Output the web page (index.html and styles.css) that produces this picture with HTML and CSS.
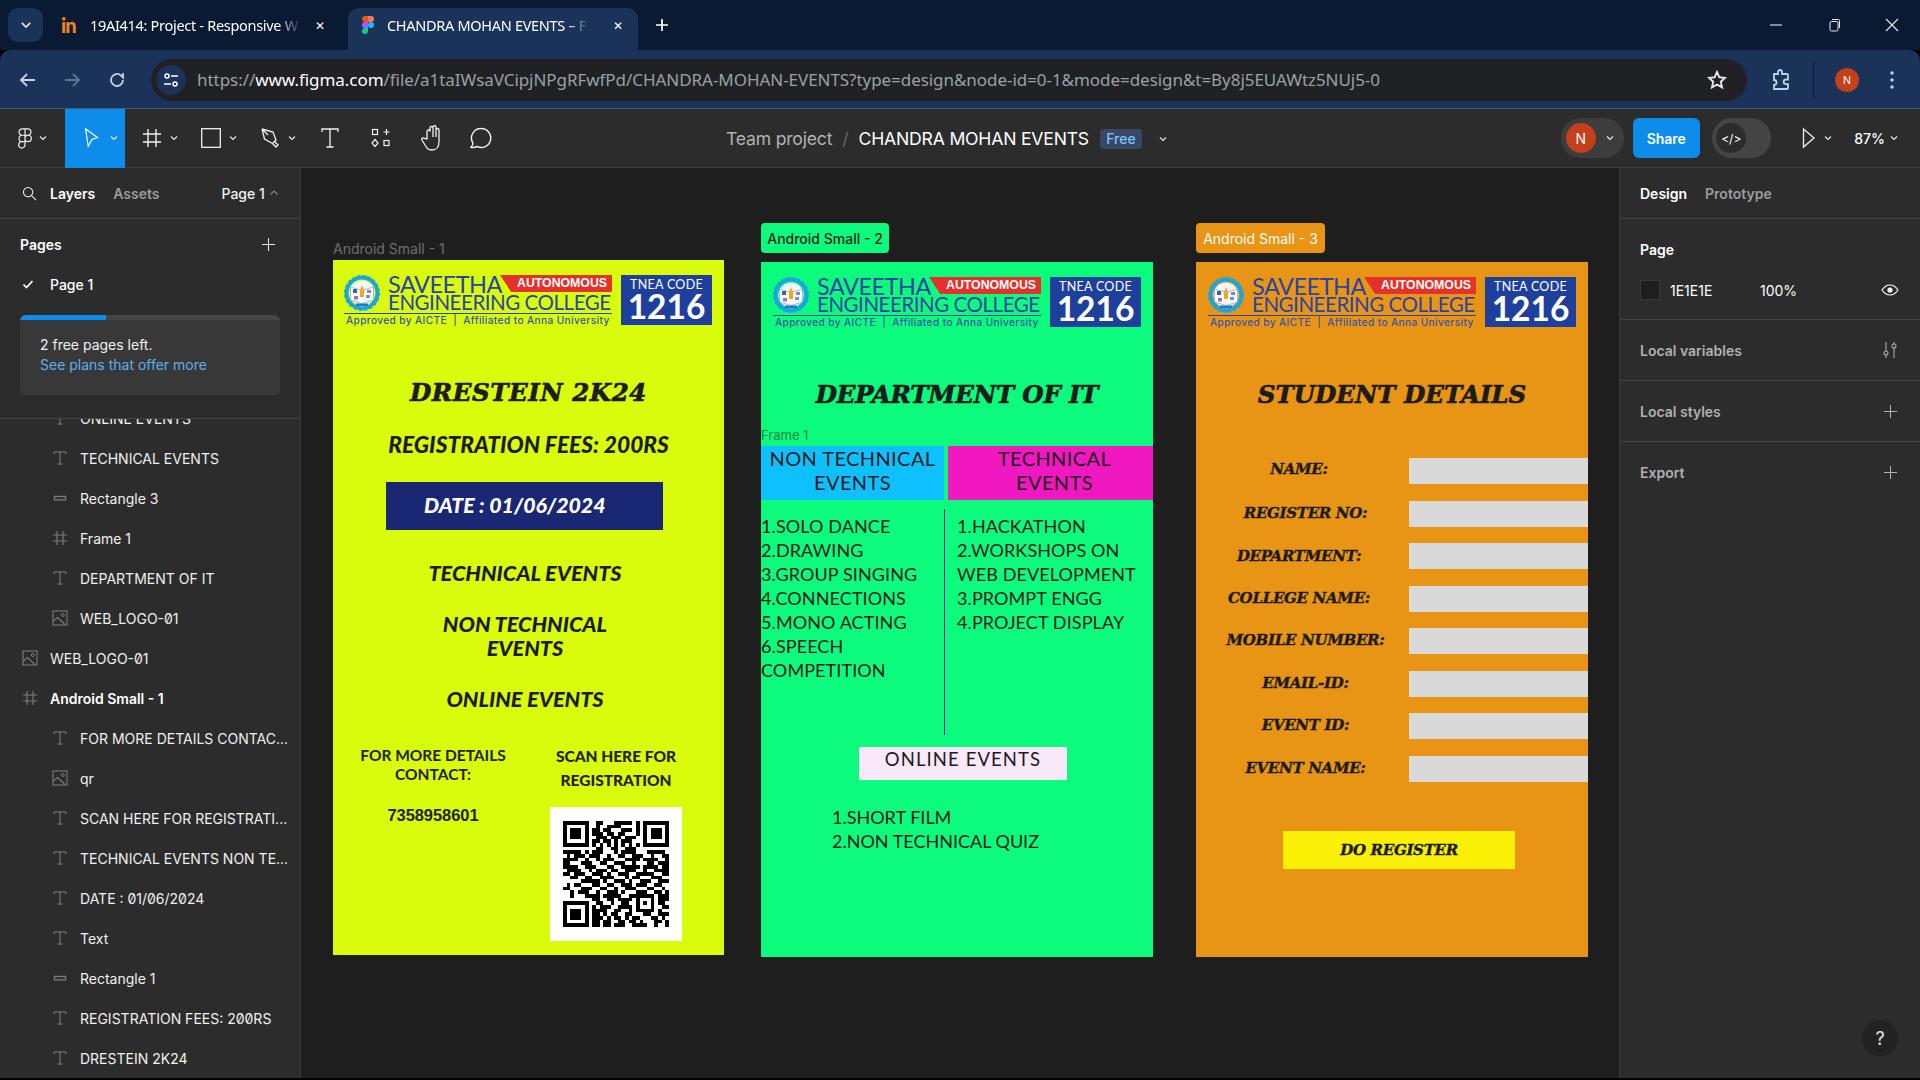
FILE: index.html
```html
<!DOCTYPE html>
<html lang="en">
<head>
<meta charset="utf-8">
<title>CHANDRA MOHAN EVENTS – Figma</title>
<link rel="stylesheet" href="styles.css">
</head>
<body>
<svg class="defs" xmlns="http://www.w3.org/2000/svg">
  <symbol id="chev" viewBox="0 0 10 10"><path d="M2 3.5 5 6.5 8 3.5" fill="none" stroke="currentColor" stroke-width="1.2"/></symbol>
  <symbol id="i-t" viewBox="0 0 16 16"><path d="M2 4V2h12v2M8 2v12M5.5 14h5" fill="none" stroke="#7b7b7b" stroke-width="1.1"/></symbol>
  <symbol id="i-rect" viewBox="0 0 16 16"><rect x="2.5" y="6.5" width="11" height="3.4" fill="none" stroke="#7b7b7b" stroke-width="1.3"/></symbol>
  <symbol id="i-frame" viewBox="0 0 16 16"><path d="M5 1v14M11 1v14M1 5h14M1 11h14" fill="none" stroke="#7b7b7b" stroke-width="1.2"/></symbol>
  <symbol id="i-img" viewBox="0 0 16 16"><rect x="1" y="1" width="14" height="14" fill="none" stroke="#7b7b7b" stroke-width="1.1"/><circle cx="10.8" cy="5" r="1.5" fill="none" stroke="#7b7b7b"/><path d="M1 11.5 5.5 7.5 13 14.5" fill="none" stroke="#7b7b7b" stroke-width="1.1"/></symbol>
  <symbol id="plus" viewBox="0 0 16 16"><path d="M8 1v14M1 8h14" fill="none" stroke="currentColor" stroke-width="1.1"/></symbol>
  <symbol id="gear" viewBox="0 0 36 36">
    <circle cx="18" cy="18" r="15.5" fill="none" stroke="#1ba6dd" stroke-width="4"/>
    <circle cx="18" cy="18" r="16.5" fill="none" stroke="#1ba6dd" stroke-width="3" stroke-dasharray="2.6 2.6"/>
    <circle cx="18" cy="18" r="12.5" fill="#f1f6fb"/>
    <path d="M6.5 12 18 15.5 29.5 12V25L18 28.5 6.5 25Z" fill="#fff" stroke="#7f9ad0" stroke-width=".7"/>
    <rect x="9" y="14" width="4" height="4" fill="#3a62b0"/>
    <rect x="10" y="21" width="4" height="3.5" fill="#a06ac6"/>
    <rect x="23" y="15" width="4" height="3" fill="#8e7ad0"/>
    <rect x="22" y="20" width="4" height="3" fill="#5d9bd8"/>
    <path d="M18 10 20.6 17H15.4Z" fill="#f2a51f"/>
    <rect x="16" y="17" width="4" height="5" fill="#f2a51f"/>
    <rect x="12" y="28.5" width="12" height="2.5" fill="#1b7bbf"/>
  </symbol>
</svg>

<div class="app">
  <header class="strip">
    <div class="tab-list"><svg class="ic10 white"><use href="#chev"/></svg></div>
    <div class="tab first-tab">
      <span class="fav-in">in</span>
      <span class="tab-title dim">19AI414: Project - Responsive W</span>
      <span class="tab-x">✕</span>
    </div>
    <div class="tab active">
      <svg class="fav-fig" viewBox="0 0 12 18"><circle cx="9" cy="9" r="3" fill="#1abcfe"/><path d="M3 18a3 3 0 0 0 3-3v-3H3a3 3 0 0 0 0 6Z" fill="#0acf83"/><path d="M0 9a3 3 0 0 1 3-3h3v6H3a3 3 0 0 1-3-3Z" fill="#a259ff"/><path d="M0 3a3 3 0 0 1 3-3h3v6H3a3 3 0 0 1-3-3Z" fill="#f24e1e"/><path d="M6 0h3a3 3 0 0 1 0 6H6Z" fill="#ff7262"/></svg>
      <span class="tab-title">CHANDRA MOHAN EVENTS – F</span>
      <span class="tab-x">✕</span>
    </div>
    <svg class="new-tab" viewBox="0 0 14 14"><path d="M7 1v12M1 7h12" stroke="#fff" stroke-width="1.7"/></svg>
    <div class="win">
      <svg viewBox="0 0 14 14"><path d="M1 7h12" stroke="#e6e9ef" stroke-width="1.1"/></svg>
      <svg viewBox="0 0 14 14"><rect x="3" y="3.5" width="8" height="9.5" rx="1.5" fill="none" stroke="#e6e9ef"/><path d="M5 1.5h6.5a1 1 0 0 1 1 1V10" fill="none" stroke="#e6e9ef"/></svg>
      <svg viewBox="0 0 14 14"><path d="M1 1l12 12M13 1 1 13" stroke="#e6e9ef" stroke-width="1.1"/></svg>
    </div>
  </header>

  <nav class="nav">
    <svg class="nav-ic" viewBox="0 0 20 20"><path d="M17 10H3.5M9 4l-6 6 6 6" fill="none" stroke="#c3d0e4" stroke-width="1.8"/></svg>
    <svg class="nav-ic" viewBox="0 0 20 20"><path d="M3 10h13.5M11 4l6 6-6 6" fill="none" stroke="#61758f" stroke-width="1.8"/></svg>
    <svg class="nav-ic" viewBox="0 0 20 20"><path d="M16 10a6 6 0 1 1-2-4.5L16 7.5V3" fill="none" stroke="#c3d0e4" stroke-width="1.8"/></svg>
    <div class="omni">
      <span class="site"><svg viewBox="0 0 18 18"><circle cx="5" cy="5" r="2" fill="none" stroke="#fff" stroke-width="1.5"/><path d="M9 5h7M2 13h7" stroke="#fff" stroke-width="1.5"/><circle cx="13" cy="13" r="2" fill="none" stroke="#fff" stroke-width="1.5"/></svg></span>
      <span class="url">https://<b>www.figma.com</b>/file/a1taIWsaVCipjNPgRFwfPd/CHANDRA-MOHAN-EVENTS?type=design&amp;node-id=0-1&amp;mode=design&amp;t=By8j5EUAWtz5NUj5-0</span>
      <svg class="star" viewBox="0 0 20 20"><path d="M10 2l2.4 5.3 5.6.6-4.2 3.8 1.2 5.7L10 14.5l-5 2.9 1.2-5.7L2 7.9l5.6-.6Z" fill="none" stroke="#e8e8ea" stroke-width="1.9"/></svg>
    </div>
    <svg class="ext" viewBox="0 0 20 22"><path d="M3 5h4V3a2 2 0 0 1 4 0v2h5a1 1 0 0 1 1 1v4.500h-2a2.300 2.300 0 0 0 0 4.600h2V19a1 1 0 0 1-1 1H3V16a2.500 2.500 0 0 0 0-5V5Z" fill="none" stroke="#bcd0ea" stroke-width="1.8"/></svg>
    <span class="nav-sep"></span>
    <span class="nav-ava">N</span>
    <svg class="kebab" viewBox="0 0 4 18"><circle cx="2" cy="2" r="1.7" fill="#c3d0e4"/><circle cx="2" cy="9" r="1.7" fill="#c3d0e4"/><circle cx="2" cy="16" r="1.7" fill="#c3d0e4"/></svg>
  </nav>

  <div class="tools">
    <div class="tool t-logo">
      <svg class="ti" viewBox="0 0 16 24"><path d="M8 2H5a3.500 3.500 0 0 0 0 7h3ZM8 2h3a3.500 3.500 0 0 1 0 7H8ZM8 9H5a3.500 3.500 0 0 0 0 7h3ZM8 16H5a3.500 3.500 0 1 0 3 3.500ZM8 12.500a3.500 3.500 0 1 0 7 0 3.500 3.500 0 0 0-7 0Z" fill="none" stroke="#f0f0f0" stroke-width="1.3"/></svg>
      <svg class="ic10 white"><use href="#chev"/></svg>
    </div>
    <div class="tool t-move">
      <svg class="ti" viewBox="0 0 18 24"><path d="M3 2 16 11.500 10 13.500 6 21Z" fill="none" stroke="#fff" stroke-width="1.3"/></svg>
      <svg class="ic10 white"><use href="#chev"/></svg>
    </div>
    <div class="tool t-w">
      <svg class="ti" viewBox="0 0 20 20"><path d="M6 1v18M14 1v18M1 6h18M1 14h18" fill="none" stroke="#f0f0f0" stroke-width="1.4"/></svg>
      <svg class="ic10 white"><use href="#chev"/></svg>
    </div>
    <div class="tool t-w">
      <svg class="ti" viewBox="0 0 20 20"><rect x="0.700" y="0.700" width="18.600" height="18.600" fill="none" stroke="#f0f0f0" stroke-width="1.300"/></svg>
      <svg class="ic10 white"><use href="#chev"/></svg>
    </div>
    <div class="tool t-w pen">
      <svg class="ti" viewBox="0 0 20 22"><path d="M2 2 13 5l3 8-3.500 3.500L16 20l2-2-3-3M2 2l2.500 10 8 4.500M2 2l6 6" fill="none" stroke="#f0f0f0" stroke-width="1.300"/></svg>
      <svg class="ic10 white"><use href="#chev"/></svg>
    </div>
    <div class="tool t-single t-text">
      <svg class="ti" viewBox="0 0 20 22"><path d="M2 5V2h16v3M10 2v18M6.500 20h7" fill="none" stroke="#f0f0f0" stroke-width="1.300"/></svg>
    </div>
    <div class="tool t-single t-comp">
      <svg class="ti" viewBox="0 0 20 20"><rect x="1.500" y="1.500" width="5" height="5" fill="none" stroke="#f0f0f0" stroke-width="1.200"/><path d="M15.500 1v6M12.500 4h6" stroke="#f0f0f0" stroke-width="1.200"/><path d="M4 11.500 7 15l-3 3.500L1 15Z" fill="none" stroke="#f0f0f0" stroke-width="1.200"/><rect x="13" y="12.500" width="5" height="5" fill="none" stroke="#f0f0f0" stroke-width="1.200"/></svg>
    </div>
    <div class="tool t-single t-hand">
      <svg class="ti big" viewBox="0 0 22 26"><path d="M6 14V6.500a1.500 1.500 0 0 1 3 0V3a1.500 1.500 0 0 1 3 0v9-10a1.500 1.500 0 0 1 3 .5V12 5a1.500 1.500 0 0 1 3 0v12c0 5-3 8-7 8s-5-1.500-7-5l-3-5c-1-1.500 1-3 2.500-1.500Z" fill="none" stroke="#f0f0f0" stroke-width="1.300"/></svg>
    </div>
    <div class="tool t-single">
      <svg class="ti big" viewBox="0 0 24 24"><path d="M12 2.500a9.500 9.500 0 1 1-4 18c-2 1-4 1.300-6 .8 1.500-1.500 2-3 1.800-4.500A9.500 9.500 0 0 1 12 2.500Z" fill="none" stroke="#f0f0f0" stroke-width="1.400"/></svg>
    </div>

    <div class="crumb">
      <span class="crumb-team">Team project</span>
      <span class="crumb-sep">/</span>
      <span class="crumb-file">CHANDRA MOHAN EVENTS</span>
      <span class="badge">Free</span>
      <svg class="ic10 white"><use href="#chev"/></svg>
    </div>

    <div class="t-right">
      <div class="who"><span class="who-ava">N</span><svg class="ic10 white"><use href="#chev"/></svg></div>
      <div class="share">Share</div>
      <div class="code"><span class="code-dot">&lt;/&gt;</span></div>
      <svg class="play" viewBox="0 0 14 22"><path d="M1.500 2 12 11 1.500 20Z" fill="none" stroke="#f0f0f0" stroke-width="1.300"/></svg>
      <svg class="ic10 white"><use href="#chev"/></svg>
      <span class="zoom">87%</span>
      <svg class="ic10 white"><use href="#chev"/></svg>
    </div>
  </div>

  <main class="main">
    <aside class="left">
      <div class="tabs">
        <svg class="search" viewBox="0 0 16 16"><circle cx="6.500" cy="6.500" r="5" fill="none" stroke="#eee" stroke-width="1.100"/><path d="M10.200 10.200 15 15" stroke="#eee" stroke-width="1.100"/></svg>
        <span class="tab-on">Layers</span>
        <span class="tab-off">Assets</span>
        <span class="page-pick">Page 1</span>
        <svg class="up" viewBox="0 0 10 10"><path d="M1.500 6.500 5 3l3.500 3.500" fill="none" stroke="#888" stroke-width="1.100"/></svg>
      </div>
      <section class="pages">
        <div class="pages-head"><span>Pages</span><svg class="plus14"><use href="#plus"/></svg></div>
        <div class="page-row"><svg class="check" viewBox="0 0 12 12"><path d="M1.500 6.500 4.500 9.500 10.500 3" fill="none" stroke="#fff" stroke-width="1.700"/></svg><span>Page 1</span></div>
        <div class="banner">
          <div class="track"><div class="fill"></div></div>
          <p class="banner-a">2 free pages left.</p>
          <p class="banner-b">See plans that offer more</p>
        </div>
      </section>
      <div class="layers">
        <div class="row l2 first"><svg><use href="#i-t"/></svg><span>ONLINE EVENTS</span></div>
        <div class="row l2"><svg><use href="#i-t"/></svg><span>TECHNICAL EVENTS</span></div>
        <div class="row l2"><svg><use href="#i-rect"/></svg><span>Rectangle 3</span></div>
        <div class="row l2"><svg><use href="#i-frame"/></svg><span>Frame 1</span></div>
        <div class="row l2"><svg><use href="#i-t"/></svg><span>DEPARTMENT OF IT</span></div>
        <div class="row l2"><svg><use href="#i-img"/></svg><span>WEB_LOGO-01</span></div>
        <div class="row l1"><svg><use href="#i-img"/></svg><span>WEB_LOGO-01</span></div>
        <div class="row l1 strong"><svg><use href="#i-frame"/></svg><span>Android Small - 1</span></div>
        <div class="row l2"><svg><use href="#i-t"/></svg><span>FOR MORE DETAILS CONTAC...</span></div>
        <div class="row l2"><svg><use href="#i-img"/></svg><span>qr</span></div>
        <div class="row l2"><svg><use href="#i-t"/></svg><span>SCAN HERE FOR REGISTRATI...</span></div>
        <div class="row l2"><svg><use href="#i-t"/></svg><span>TECHNICAL EVENTS NON TE...</span></div>
        <div class="row l2"><svg><use href="#i-t"/></svg><span>DATE : 01/06/2024</span></div>
        <div class="row l2"><svg><use href="#i-t"/></svg><span>Text</span></div>
        <div class="row l2"><svg><use href="#i-rect"/></svg><span>Rectangle 1</span></div>
        <div class="row l2"><svg><use href="#i-t"/></svg><span>REGISTRATION FEES: 200RS</span></div>
        <div class="row l2"><svg><use href="#i-t"/></svg><span>DRESTEIN 2K24</span></div>
      </div>
    </aside>

    <section class="canvas">
      <!-- Frame 1 -->
      <div class="frame f1">
        <span class="frame-label plain">Android Small - 1</span>
        <div class="logo">
          <div class="logo-main">
            <svg class="gear"><use href="#gear"/></svg>
            <div class="logo-words">
              <div class="logo-top"><span class="sav">SAVEETHA</span><span class="auto">AUTONOMOUS</span></div>
              <div class="eng">ENGINEERING COLLEGE</div>
            </div>
            <div class="appr">Approved by AICTE &nbsp;|&nbsp; Affiliated to Anna University</div>
          </div>
          <div class="tnea"><span class="tn-a">TNEA CODE</span><span class="tn-b">1216</span></div>
        </div>
        <h1 class="title">DRESTEIN 2K24</h1>
        <h2 class="fees">REGISTRATION FEES: 200RS</h2>
        <div class="date"><span>DATE : 01/06/2024</span></div>
        <div class="ev-list">
          <p class="ev first">TECHNICAL EVENTS</p>
          <p class="ev gap">NON TECHNICAL<br>EVENTS</p>
          <p class="ev gap">ONLINE EVENTS</p>
        </div>
        <div class="foot">
          <div class="contact">
            <p class="contact-t">FOR MORE DETAILS<br>CONTACT:</p>
            <p class="phone">7358958601</p>
          </div>
          <div class="scan">
            <p class="scan-t">SCAN HERE FOR<br>REGISTRATION</p>
            <div class="qr">
              <svg viewBox="0 0 29 29" shape-rendering="crispEdges">
                <path fill="none" stroke="#000" d="M.5.5h6v6h-6zM22.500.5h6v6h-6zM.5 22.500h6v6h-6z"/>
                <path fill="#000" d="M2 2h3v3H2zM24 2h3v3h-3zM2 24h3v3H2z"/>
                <path fill="none" stroke="#000" d="M9 .5h2M14 .5h5M20 .5h1M9 1.500h1M12 1.500h4M20 1.500h1M8 2.500h2M11 2.500h2M16 2.500h3M20 2.500h1M8 3.500h3M12 3.500h2M15 3.500h2M20 3.500h1M9 4.500h3M13 4.500h3M17 4.500h3M8 5.500h2M11 5.500h2M14 5.500h1M16 5.500h3M8 6.500h1M10 6.500h1M12 6.500h1M14 6.500h1M16 6.500h1M18 6.500h1M20 6.500h1M9 7.500h2M13 7.500h2M17 7.500h3M0 8.500h5M6 8.500h1M8 8.500h3M14 8.500h1M16 8.500h4M23 8.500h5M1 9.500h1M3 9.500h3M7 9.500h3M12 9.500h1M15 9.500h2M19 9.500h3M24 9.500h1M27 9.500h2M0 10.500h4M6 10.500h1M9 10.500h1M11 10.500h3M17 10.500h4M22 10.500h4M28 10.500h1M0 11.500h2M5 11.500h3M10 11.500h2M14 11.500h3M19 11.500h1M23 11.500h2M26 11.500h3M0 12.500h4M6 12.500h3M12 12.500h2M16 12.500h5M22 12.500h4M27 12.500h2M1 13.500h4M7 13.500h1M9 13.500h3M13 13.500h2M17 13.500h3M22 13.500h1M25 13.500h4M0 14.500h2M3 14.500h3M8 14.500h3M12 14.500h1M15 14.500h3M20 14.500h5M27 14.500h2M2 15.500h2M6 15.500h2M10 15.500h4M17 15.500h1M19 15.500h2M24 15.500h3M5 16.500h5M11 16.500h1M14 16.500h3M18 16.500h1M21 16.500h3M26 16.500h3M1 17.500h1M3 17.500h2M8 17.500h2M12 17.500h2M16 17.500h3M20 17.500h3M25 17.500h2M0 18.500h2M5 18.500h3M10 18.500h2M14 18.500h1M17 18.500h3M23 18.500h2M27 18.500h1M2 19.500h1M4 19.500h3M9 19.500h1M12 19.500h3M16 19.500h1M20 19.500h3M25 19.500h2M28 19.500h1M2 20.500h1M6 20.500h4M11 20.500h5M18 20.500h7M26 20.500h3M8 21.500h2M12 21.500h2M15 21.500h4M20 21.500h1M24 21.500h1M26 21.500h3M9 22.500h2M13 22.500h1M16 22.500h2M20 22.500h1M22 22.500h1M24 22.500h1M26 22.500h2M8 23.500h1M10 23.500h3M15 23.500h4M20 23.500h1M24 23.500h1M27 23.500h2M8 24.500h4M14 24.500h2M18 24.500h1M20 24.500h5M26 24.500h1M8 25.500h2M11 25.500h1M13 25.500h2M17 25.500h2M22 25.500h2M26 25.500h3M8 26.500h3M12 26.500h1M14 26.500h2M17 26.500h1M19 26.500h2M24 26.500h2M27 26.500h1M8 27.500h2M11 27.500h2M15 27.500h2M18 27.500h2M21 27.500h1M25 27.500h2M28 27.500h1M8 28.500h2M11 28.500h2M14 28.500h3M19 28.500h4M25 28.500h1M28 28.500h1"/>
              </svg>
            </div>
          </div>
        </div>
      </div>

      <!-- Frame 2 -->
      <div class="frame f2">
        <span class="frame-label pill-green">Android Small - 2</span>
        <div class="logo">
          <div class="logo-main">
            <svg class="gear"><use href="#gear"/></svg>
            <div class="logo-words">
              <div class="logo-top"><span class="sav">SAVEETHA</span><span class="auto">AUTONOMOUS</span></div>
              <div class="eng">ENGINEERING COLLEGE</div>
            </div>
            <div class="appr">Approved by AICTE &nbsp;|&nbsp; Affiliated to Anna University</div>
          </div>
          <div class="tnea"><span class="tn-a">TNEA CODE</span><span class="tn-b">1216</span></div>
        </div>
        <h1 class="title">DEPARTMENT OF IT</h1>
        <div class="inner-label">Frame 1</div>
        <div class="heads">
          <div class="head blue">NON TECHNICAL<br>EVENTS</div>
          <div class="head pink">TECHNICAL<br>EVENTS</div>
        </div>
        <div class="lists">
          <div class="list-l">1.SOLO DANCE<br>2.DRAWING<br>3.GROUP SINGING<br>4.CONNECTIONS<br>5.MONO ACTING<br>6.SPEECH<br>COMPETITION</div>
          <div class="list-r">1.HACKATHON<br>2.WORKSHOPS ON<br>WEB DEVELOPMENT<br>3.PROMPT ENGG<br>4.PROJECT DISPLAY</div>
        </div>
        <div class="online">ONLINE EVENTS</div>
        <div class="online-list">1.SHORT FILM<br>2.NON TECHNICAL QUIZ</div>
      </div>

      <!-- Frame 3 -->
      <div class="frame f3">
        <span class="frame-label pill-orange">Android Small - 3</span>
        <div class="logo">
          <div class="logo-main">
            <svg class="gear"><use href="#gear"/></svg>
            <div class="logo-words">
              <div class="logo-top"><span class="sav">SAVEETHA</span><span class="auto">AUTONOMOUS</span></div>
              <div class="eng">ENGINEERING COLLEGE</div>
            </div>
            <div class="appr">Approved by AICTE &nbsp;|&nbsp; Affiliated to Anna University</div>
          </div>
          <div class="tnea"><span class="tn-a">TNEA CODE</span><span class="tn-b">1216</span></div>
        </div>
        <h1 class="title">STUDENT DETAILS</h1>
        <div class="form">
          <div class="form-row"><label class="nudge-l">NAME:</label><span class="input"></span></div>
          <div class="form-row"><label class="nudge-r">REGISTER NO:</label><span class="input"></span></div>
          <div class="form-row"><label class="nudge-l">DEPARTMENT:</label><span class="input"></span></div>
          <div class="form-row"><label class="nudge-l">COLLEGE NAME:</label><span class="input"></span></div>
          <div class="form-row"><label class="nudge-r">MOBILE NUMBER:</label><span class="input"></span></div>
          <div class="form-row"><label class="nudge-r">EMAIL-ID:</label><span class="input"></span></div>
          <div class="form-row"><label class="nudge-r">EVENT ID:</label><span class="input"></span></div>
          <div class="form-row"><label class="nudge-r">EVENT NAME:</label><span class="input"></span></div>
        </div>
        <div class="register">DO REGISTER</div>
      </div>
    </section>

    <aside class="right">
      <div class="tabs r-tabs"><span class="tab-on">Design</span><span class="tab-off">Prototype</span></div>
      <section class="r-page">
        <h3>Page</h3>
        <div class="fill-row">
          <span class="swatch"></span><span class="hex">1E1E1E</span><span class="pct">100%</span>
          <svg class="eye" viewBox="0 0 18 12"><path d="M1 6c2-3 5-5 8-5s6 2 8 5c-2 3-5 5-8 5S3 9 1 6Z" fill="none" stroke="#fff" stroke-width="1.100"/><circle cx="9" cy="6" r="2.600" fill="#fff"/></svg>
        </div>
      </section>
      <div class="r-sec"><span>Local variables</span>
        <svg class="r-ic" viewBox="0 0 16 18"><path d="M4 1v9M4 14v3M12 1v2M12 7v10" stroke="#aaa" stroke-width="1.100"/><circle cx="4" cy="12" r="2" fill="none" stroke="#aaa" stroke-width="1.100"/><circle cx="12" cy="5" r="2" fill="none" stroke="#aaa" stroke-width="1.100"/></svg>
      </div>
      <div class="r-sec"><span>Local styles</span><svg class="plus14 gray"><use href="#plus"/></svg></div>
      <div class="r-sec none"><span>Export</span><svg class="plus14 gray"><use href="#plus"/></svg></div>
      <div class="help">?</div>
    </aside>
  </main>
  <div class="bottom"></div>
</div>
</body>
</html>
```

FILE: styles.css
```css
* { box-sizing: border-box; }
html, body { margin: 0; padding: 0; height: 100%; }
body { background: #000; overflow: hidden; font-family: Inter, "Liberation Sans", sans-serif; color: #fff; }
h1, h2, h3, p { margin: 0; font-weight: normal; }
.defs { display: none; }
.app { width: 1920px; height: 1080px; display: flex; flex-direction: column; }
.ic10 { width: 10px; height: 10px; flex: none; }
.white { color: #e6e6e6; }

/* Browser tab strip */
.strip { height: 50px; flex: none; background: #0a1a33; display: flex; align-items: flex-end; padding-left: 8px; }
.tab-list { width: 35px; height: 34px; align-self: center; background: #1a3358; border-radius: 10px; display: flex; align-items: center; justify-content: center; }
.tab-list .ic10 { width: 14px; height: 14px; }
.tab { height: 42px; padding-bottom: 8px; display: flex; align-items: center; font-family: "Noto Sans", sans-serif; font-size: 14.5px; color: #fff; }
.first-tab { width: 295px; margin-left: 1px; padding-left: 17px; padding-right: 11px; }
.tab.active { width: 290px; background: #1b3358; border-radius: 11px 11px 0 0; padding-left: 14px; padding-right: 12px; margin-left: 9px; }
.fav-in { width: 20px; flex: none; color: #f0851e; font-family: Lato, sans-serif; font-weight: 900; font-size: 20px; line-height: 20px; letter-spacing: -1px; margin-right: 9px; }
.fav-fig { width: 12px; height: 18px; flex: none; margin-right: 13px; }
.tab-title { flex: none; white-space: nowrap; letter-spacing: -.3px; -webkit-mask-image: linear-gradient(90deg, #000 90%, rgba(0,0,0,.15)); mask-image: linear-gradient(90deg, #000 90%, rgba(0,0,0,.15)); }
.tab-x { flex: none; width: 16px; font-size: 12px; text-align: center; margin-left: auto; }
.new-tab { width: 14px; height: 14px; margin: 0 0 18px 17px; flex: none; }
.win { margin-left: auto; align-self: flex-start; height: 50px; display: flex; align-items: center; padding-right: 21px; gap: 44px; }
.win svg { width: 14px; height: 14px; }

/* Browser address bar */
.nav { height: 59px; flex: none; background: #1b3358; border-bottom: 1px solid #3d5a85; border-radius: 10px 10px 0 0; display: flex; align-items: center; padding: 1px 0 0 18px; }
.nav-ic { width: 20px; height: 20px; margin-right: 25px; flex: none; }
.nav-ic:nth-child(1) { margin-right: 24px; }
.nav-ic:nth-child(3) { margin-right: 24px; }
.omni { width: 1596px; height: 42px; background: #202124; border-radius: 21px; display: flex; align-items: center; padding: 0 20px 0 5px; flex: none; }
.site { width: 30px; height: 30px; border-radius: 50%; background: #1b3358; display: flex; align-items: center; justify-content: center; flex: none; }
.site svg { width: 18px; height: 18px; }
.url { margin-left: 11px; font-family: "Noto Sans", sans-serif; font-size: 17px; color: #9aa0a6; letter-spacing: -.05px; white-space: nowrap; flex: 1; }
.url b { font-weight: normal; color: #fff; }
.star { width: 20px; height: 20px; flex: none; }
.ext { width: 20px; height: 22px; margin-left: 24px; flex: none; }
.nav-sep { width: 1px; height: 36px; margin-left: 22px; background: #0a1a33; flex: none; }
.nav-ava { width: 24px; height: 24px; margin-left: 21px; border-radius: 50%; background: #c5401a; font-family: "Noto Sans", sans-serif; font-size: 11px; display: flex; align-items: center; justify-content: center; flex: none; }
.kebab { width: 4px; height: 18px; margin-left: 31px; flex: none; }

/* Figma toolbar */
.tools { height: 59px; flex: none; background: #2c2c2c; border-bottom: 1px solid #3d3d3d; display: flex; align-items: center; position: relative; }
.tool { height: 59px; display: flex; align-items: center; flex: none; }
.ti { width: 20px; height: 22px; flex: none; }
.ti.big { width: 24px; height: 26px; }
.t-logo { width: 65px; padding-left: 15px; gap: 3px; }
.t-move { width: 60px; background: #0d8ce9; padding-left: 16px; gap: 8px; }
.t-w { width: 59px; padding-left: 17px; gap: 7px; }
.t-w.pen { width: 71px; }
.t-single { width: 49px; padding-left: 6px; }
.t-text { width: 51px; }
.crumb { position: absolute; left: 726px; top: 0; height: 59px; display: flex; align-items: center; font-size: 17.6px; white-space: nowrap; }
.crumb-team { color: #b3b3b3; letter-spacing: -.2px; }
.crumb-sep { color: #666; margin: 0 10px; }
.crumb-file { color: #fff; letter-spacing: -.2px; }
.badge { margin: 0 16px 0 11px; width: 42px; height: 20px; border-radius: 4px; background: #3a4668; color: #7cc4f8; font-size: 14px; font-weight: 500; display: flex; align-items: center; justify-content: center; }
.t-right { margin-left: auto; height: 59px; display: flex; align-items: center; flex: none; padding-right: 21px; }
.who { width: 63px; height: 40px; border-radius: 20px; background: #3d3d3d; display: flex; align-items: center; padding-left: 5px; gap: 9px; }
.who-ava { width: 30px; height: 30px; border-radius: 50%; background: #c5401a; font-size: 14px; display: flex; align-items: center; justify-content: center; }
.share { width: 67px; height: 40px; margin-left: 9px; border-radius: 6px; background: #0d8ce9; font-size: 14px; font-weight: 600; display: flex; align-items: center; justify-content: center; }
.code { width: 59px; height: 40px; margin-left: 12.5px; border-radius: 20px; background: #444; padding-left: 4px; display: flex; align-items: center; }
.code-dot { width: 30px; height: 30px; border-radius: 50%; background: #2c2c2c; font-size: 12px; display: flex; align-items: center; justify-content: center; }
.play { width: 14px; height: 22px; margin: 0 7px 0 31px; flex: none; }
.zoom { margin: 0 4px 0 21px; font-size: 14px; font-weight: 500; }

/* Main */
.main { flex: 1; min-height: 0; display: flex; background: #1e1e1e; }
.bottom { height: 2px; flex: none; background: #000; }
.left { width: 301px; flex: none; background: #2c2c2c; border-right: 1px solid #3a3a3a; display: flex; flex-direction: column; font-size: 14px; overflow: hidden; }
.tabs { height: 51px; flex: none; border-bottom: 1px solid #444; display: flex; align-items: center; padding-left: 22px; font-size: 14px; font-weight: 600; }
.search { width: 15px; height: 15px; margin-right: 13px; }
.tab-on { color: #fff; }
.tab-off { color: #9b9b9b; margin-left: 18px; }
.page-pick { margin-left: 62px; color: #f0f0f0; font-weight: 500; }
.up { width: 10px; height: 10px; margin-left: 4px; }
.pages { height: 200px; flex: none; border-bottom: 1px solid #444; padding: 0 20px; }
.pages-head { height: 51px; display: flex; align-items: center; justify-content: space-between; font-weight: 600; padding-right: 4px; }
.plus14 { width: 15px; height: 15px; color: #e6e6e6; flex: none; }
.plus14.gray { color: #b0b0b0; }
.page-row { height: 28px; display: flex; align-items: center; font-weight: 500; }
.check { width: 12px; height: 12px; margin: 0 16px 0 2px; }
.banner { margin-top: 17px; height: 80px; background: #383838; border-radius: 6px; overflow: hidden; line-height: 20px; }
.track { height: 5px; background: #454545; }
.fill { width: 86px; height: 5px; background: #0d8ce9; }
.banner-a { margin: 15px 0 0 20px; color: #f0f0f0; }
.banner-b { margin-left: 20px; color: #5db0f0; }
.layers { flex: 1; overflow: hidden; }
.row { height: 40px; display: flex; align-items: center; gap: 10px; white-space: nowrap; color: #f0f0f0; font-size: 14px; font-feature-settings: "zero"; }
.row svg { width: 16px; height: 16px; margin: 0 2px; flex: none; }
.row.first { margin-top: -21px; }
.l1 { padding-left: 20px; }
.l2 { padding-left: 50px; }
.strong { font-weight: 600; color: #fff; }

/* Right panel */
.right { position: relative; width: 301px; flex: none; background: #2c2c2c; border-left: 1px solid #3a3a3a; font-size: 14px; }
.r-tabs { padding-left: 20px; }
.r-page { height: 101px; border-bottom: 1px solid #444; padding: 21px 20px 0; }
.r-page h3 { font-size: 14px; font-weight: 600; line-height: 20px; }
.fill-row { display: flex; align-items: center; height: 20px; margin-top: 20px; }
.swatch { width: 20px; height: 20px; background: #1e1e1e; border: 1px solid #383838; }
.hex { margin-left: 10px; width: 90px; }
.eye { width: 18px; height: 12px; margin-left: auto; margin-right: 1px; }
.r-sec { height: 61px; border-bottom: 1px solid #444; padding: 0 22px 0 20px; display: flex; align-items: center; justify-content: space-between; color: #b0b0b0; font-weight: 600; }
.r-sec.none { border-bottom: 0; }
.r-ic { width: 16px; height: 18px; }
.help { position: absolute; right: 22px; bottom: 22px; width: 36px; height: 36px; border-radius: 50%; background: #222; color: #e6e6e6; font-size: 18px; display: flex; align-items: center; justify-content: center; }

/* Canvas */
.canvas { flex: 1; position: relative; background: #1e1e1e; overflow: visible; }
.frame { position: absolute; width: 392px; height: 695px; }
.f1 { left: 32px; top: 92px; width: 391px; background: #d9fb0c; }
.f2 { left: 460px; top: 94px; background: #0cfb7c; }
.f3 { left: 895px; top: 94px; background: #e89414; }
.frame-label { position: absolute; white-space: nowrap; font-size: 14px; }
.plain { left: 0; top: -20px; color: #6e6e6e; }
.pill-green, .pill-orange { left: 0; top: -39px; height: 30px; width: 128px; border-radius: 4px; display: flex; align-items: center; justify-content: center; }
.pill-green { background: #0cfb7c; color: #1e1e1e; font-weight: 500; }
.pill-orange { width: 129px; background: #e89414; color: #fff; }

.logo { padding: 15px 0 0 12px; height: 66px; display: flex; align-items: flex-start; }
.f1 .logo { padding-left: 11px; }
.logo-main { width: 268px; display: grid; grid-template-columns: 36px minmax(0, 1fr); column-gap: 8px; }
.gear { width: 36px; height: 36px; }
.logo-words { min-width: 0; display: flex; flex-direction: column; color: #2a44a5; font-family: Lato, sans-serif; }
.logo-top { height: 19px; display: flex; align-items: flex-start; position: relative; }
.sav { font-size: 23.5px; line-height: 19px; letter-spacing: -.5px; }
.auto { position: absolute; right: 0; top: 0; width: 112px; height: 17px; padding-left: 12px; background: #e4312b; clip-path: polygon(0 0, 100% 0, 100% 100%, 10% 100%); color: #fff; font-family: "Liberation Sans", sans-serif; font-weight: 700; font-size: 12.3px; line-height: 17px; text-align: center; white-space: nowrap; }
.eng { font-size: 20.5px; line-height: 16px; white-space: nowrap; letter-spacing: -.45px; }
.appr { grid-column: 1 / 3; border-top: 1px solid #2a44a5; margin-top: 2px; font-family: Inter, sans-serif; font-size: 10.1px; line-height: 12px; color: #3a56a8; white-space: nowrap; padding-left: 2px; letter-spacing: .4px; font-weight: 500; }
.tnea { width: 91px; height: 50px; margin-left: 9px; background: #1f3f9c; display: flex; flex-direction: column; align-items: center; color: #fff; font-family: Lato, sans-serif; flex: none; }
.tn-a { font-size: 12.5px; line-height: 15px; margin-top: 2px; letter-spacing: .3px; white-space: nowrap; }
.tn-b { font-size: 33.5px; line-height: 28px; font-weight: 700; }

.title { margin-top: 52px; height: 30px; font-family: "DejaVu Serif", serif; font-size: 24.5px; font-weight: 700; font-style: italic; line-height: 30px; text-align: center; color: #1c1c1c; white-space: nowrap; letter-spacing: -.2px; -webkit-text-stroke: .7px #1c1c1c; }
.f1 .title { letter-spacing: .55px; }
.f3 .title { letter-spacing: 0; }
.fees { margin-top: 24px; font-family: Lato, sans-serif; font-weight: 900; font-style: italic; font-size: 22.7px; line-height: 26px; text-align: center; color: #1c1c1c; white-space: nowrap; }
.date { margin: 23.7px 0 0 53px; width: 277px; height: 48px; background: #1a2874; color: #fff; font-family: Lato, sans-serif; font-weight: 900; font-style: italic; font-size: 21.3px; display: flex; align-items: center; padding: 0 0 2px 38px; white-space: nowrap; }
.ev-list { padding-right: 7px; text-align: center; }
.ev { color: #1c1c1c; font-family: Lato, sans-serif; font-weight: 900; font-style: italic; font-size: 21.7px; line-height: 24.5px; }
.ev.first { margin-top: 31.2px; }
.ev.gap { margin-top: 26.2px; }
.foot { margin-top: 36.3px; display: grid; grid-template-columns: 200px 132px; column-gap: 17px; color: #222; text-align: center; }
.contact-t { font-family: Lato, sans-serif; font-size: 15.5px; font-weight: 700; line-height: 19.5px; white-space: nowrap; margin-top: -2px; }
.phone { margin-top: 21px; font-family: "Liberation Sans", sans-serif; font-weight: 700; font-size: 16.4px; line-height: 18px; }
.scan-t { font-family: Lato, sans-serif; font-size: 15.5px; font-weight: 900; line-height: 24px; white-space: nowrap; margin-top: -4px; }
.qr { width: 132px; height: 134px; margin-top: 15px; background: #fff; padding: 14px 13px; }
.qr svg { width: 106px; height: 106px; display: block; }

.inner-label { margin-top: 18px; height: 14px; font-size: 13px; line-height: 14px; color: #0a8a4c; }
.heads { margin-top: 4px; display: grid; grid-template-columns: 183px 205px; column-gap: 4px; height: 54px; }
.head { text-align: center; font-family: Lato, sans-serif; font-size: 20px; letter-spacing: .4px; line-height: 24px; color: #1c1c1c; white-space: nowrap; }
.blue { background: #0fc0ff; }
.pink { background: #f018c0; padding-left: 8px; }
.lists { margin-top: 9px; height: 226px; display: grid; grid-template-columns: 183px 1fr; font-family: Lato, sans-serif; font-size: 18px; letter-spacing: .1px; line-height: 24px; color: #1c1c1c; white-space: nowrap; }
.list-l { padding-top: 4.5px; }
.list-r { padding: 4.5px 0 0 12px; border-left: 1px solid #3a1fb8; }
.online { margin: 12px 0 0 98px; width: 208px; height: 33px; background: #f8e8fa; text-align: center; font-family: Lato, sans-serif; font-size: 18.5px; letter-spacing: 1.1px; line-height: 24px; color: #1c1c1c; }
.online-list { margin: 25px 0 0 71px; font-family: Lato, sans-serif; font-size: 18px; line-height: 24px; color: #1c1c1c; white-space: nowrap; }

.form { margin-top: 48px; display: flex; flex-direction: column; gap: 16.5px; }
.form-row { height: 26px; display: flex; align-items: center; }
.form-row label { width: 213px; margin-top: -2px; text-align: center; font-family: "DejaVu Serif", serif; font-style: italic; font-weight: 700; font-size: 15px; letter-spacing: -.3px; color: #1c1c1c; white-space: nowrap; -webkit-text-stroke: .4px #1c1c1c; }
.form-row:first-child label { margin-top: -5px; }
.form-row:nth-child(3) label { margin-top: 0; }
.nudge-l { padding-right: 7px; }
.nudge-r { padding-left: 6px; }
.input { width: 179px; height: 26px; background: #d9d9d9; flex: none; }
.register { margin: 49.5px 0 0 87px; width: 232px; height: 38px; background: #faf005; display: flex; align-items: center; justify-content: center; font-family: "DejaVu Serif", serif; font-style: italic; font-weight: 700; font-size: 15px; letter-spacing: -.3px; color: #1c1c1c; -webkit-text-stroke: .4px #1c1c1c; }
```
